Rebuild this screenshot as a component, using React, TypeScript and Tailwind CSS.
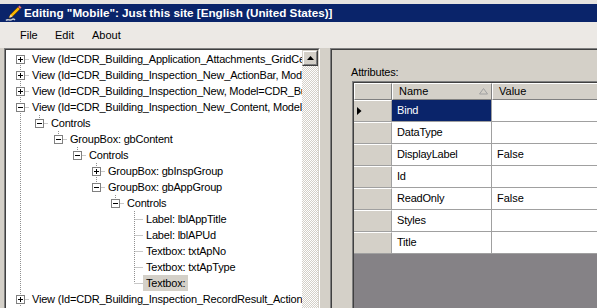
import React from 'react';

type Node = {
  text: string;
  level: number;
  box?: 'plus' | 'minus';
  next: boolean;
  anc: boolean[];
  first?: boolean;
  selected?: boolean;
};

const nodes: Node[] = [
  { text: 'View (Id=CDR_Building_Application_Attachments_GridCell, Model=CDR_Building_Application)', level: 0, box: 'plus', next: true, anc: [], first: true },
  { text: 'View (Id=CDR_Building_Inspection_New_ActionBar, Model=CDR_Building_Inspection)', level: 0, box: 'plus', next: true, anc: [] },
  { text: 'View (Id=CDR_Building_Inspection_New, Model=CDR_Building_Inspection)', level: 0, box: 'plus', next: true, anc: [] },
  { text: 'View (Id=CDR_Building_Inspection_New_Content, Model=CDR_Building_Inspection)', level: 0, box: 'minus', next: true, anc: [] },
  { text: 'Controls', level: 1, box: 'minus', next: false, anc: [true] },
  { text: 'GroupBox: gbContent', level: 2, box: 'minus', next: false, anc: [true, false] },
  { text: 'Controls', level: 3, box: 'minus', next: false, anc: [true, false, false] },
  { text: 'GroupBox: gbInspGroup', level: 4, box: 'plus', next: true, anc: [true, false, false, false] },
  { text: 'GroupBox: gbAppGroup', level: 4, box: 'minus', next: false, anc: [true, false, false, false] },
  { text: 'Controls', level: 5, box: 'minus', next: false, anc: [true, false, false, false, false] },
  { text: 'Label: lblAppTitle', level: 6, next: true, anc: [true, false, false, false, false, false] },
  { text: 'Label: lblAPUd', level: 6, next: true, anc: [true, false, false, false, false, false] },
  { text: 'Textbox: txtApNo', level: 6, next: true, anc: [true, false, false, false, false, false] },
  { text: 'Textbox: txtApType', level: 6, next: true, anc: [true, false, false, false, false, false] },
  { text: 'Textbox:', level: 6, next: false, anc: [true, false, false, false, false, false], selected: true },
  { text: 'View (Id=CDR_Building_Inspection_RecordResult_ActionBar, Model=CDR_Building_Inspection)', level: 0, box: 'plus', next: true, anc: [] },
];

const attrs: [string, string][] = [
  ['Bind', ''],
  ['DataType', ''],
  ['DisplayLabel', 'False'],
  ['Id', ''],
  ['ReadOnly', 'False'],
  ['Styles', ''],
  ['Title', ''],
];

const dot = { stroke: '#909090', strokeDasharray: '1 1', strokeWidth: 1 };

function Guides({ n }: { n: Node }) {
  const cx = (k: number) => 14.5 + 19 * k;
  const c = cx(n.level);
  return (
    <svg width={23 + 19 * n.level} height={16} className="shrink-0">
      {n.anc.map((a, k) => (a ? <line key={k} x1={cx(k)} x2={cx(k)} y1={0} y2={16} {...dot} /> : null))}
      {!n.first && <line x1={c} x2={c} y1={0} y2={8} {...dot} />}
      {n.next && <line x1={c} x2={c} y1={8} y2={16} {...dot} />}
      <line x1={c} x2={c + 10} y1={8.5} y2={8.5} {...dot} />
      {n.box && (
        <g>
          <rect x={c - 4} y={4.5} width={8} height={8} fill="#fff" stroke="#808080" />
          <line x1={c - 2.5} x2={c + 2.5} y1={8.5} y2={8.5} stroke="#000" />
          {n.box === 'plus' && <line x1={c} x2={c} y1={6} y2={11} stroke="#000" />}
        </g>
      )}
    </svg>
  );
}

function Pencil() {
  return (
    <svg width="17" height="17" viewBox="0 0 17 17" className="shrink-0">
      <path d="M1 15.5 C3 13 5 16.5 7 14.5 C8 13.5 9 14 10 15" stroke="#c8ccd4" strokeWidth="1.5" fill="none" />
      <polygon points="4,13 5.5,9.5 13,2 15,4 7.5,11.5" fill="#f7b500" stroke="#7a4e00" strokeWidth="0.8" />
      <polygon points="13,2 14.5,0.6 16.4,2.5 15,4" fill="#e9798a" stroke="#7a3a40" strokeWidth="0.6" />
      <polygon points="4,13 5.5,9.5 7.5,11.5" fill="#f4dcae" />
      <polygon points="3.2,14 4,12.2 4.9,13.1" fill="#222" />
    </svg>
  );
}

function Bevel({ children, className = '' }: { children?: React.ReactNode; className?: string }) {
  return (
    <div className={`border border-t-[#d4d0c8] border-l-[#d4d0c8] border-r-[#404040] border-b-[#404040] ${className}`}>
      <div className="w-full h-full border border-t-white border-l-white border-r-[#808080] border-b-[#808080] bg-[#d4d0c8] flex items-center justify-center">
        {children}
      </div>
    </div>
  );
}

export default function App() {
  return (
    <div className="w-[597px] h-[308px] overflow-hidden bg-[#d4d0c8] flex flex-col font-['Liberation_Sans',Arial,sans-serif] text-[11px] leading-[13px] text-black">
      <div className="h-[4px] bg-[#e6e3df] shrink-0" />
      <div className="h-[18px] bg-[#0a246a] flex items-center pl-[5px] gap-[2px] shrink-0">
        <Pencil />
        <span className="text-white font-bold text-[11.7px] whitespace-nowrap leading-[18px]">
          Editing "Mobile": Just this site [English (United States)]
        </span>
      </div>
      <div className="h-[26px] bg-[#ece9e5] flex items-center pl-[20px] shrink-0">
        <span className="w-[35px]">File</span>
        <span className="w-[37px]">Edit</span>
        <span>About</span>
      </div>

      <div className="flex-1 flex min-h-0 pl-[4px]">
        {/* tree */}
        <div className="w-[316px] shrink-0 h-[280px] border-t border-l border-r border-t-[#808080] border-l-[#808080] border-r-white">
          <div className="h-full border-t border-l border-r border-t-[#404040] border-l-[#404040] border-r-[#d4d0c8] flex">
            <div className="flex-1 min-w-0 bg-white overflow-hidden pt-[1px] tracking-[-0.2px]">
              {nodes.map((n, i) => (
                <div key={i} className="flex h-[16px] items-center whitespace-nowrap">
                  <Guides n={n} />
                  <span className={`px-[3px] leading-[16px] h-[16px] ${n.selected ? 'bg-[#d4d0c8]' : ''}`}>{n.text}</span>
                </div>
              ))}
            </div>
            <div className="w-[16px] shrink-0 flex flex-col">
              <Bevel className="h-[16px] shrink-0">
                <svg width="7" height="4" viewBox="0 0 7 4">
                  <polygon points="3.5,0 7,4 0,4" fill="#000" />
                </svg>
              </Bevel>
              <div className="flex-1 bg-[conic-gradient(#d4d0c8_25%,#ffffff_0_50%,#d4d0c8_0_75%,#ffffff_0)] bg-[length:2px_2px]" />
            </div>
          </div>
        </div>

        {/* splitter */}
        <div className="w-[10px] shrink-0" />

        {/* attributes */}
        <div className="w-[320px] shrink-0 h-[280px] border-t border-l border-[#808080]">
          <div className="h-full border-t border-l border-[#404040] pl-[19px] flex flex-col">
            <div className="mt-[16px] h-[13px] leading-[13px] tracking-[-0.2px]">Attributes:</div>
            <div className="mt-[2px] ml-[1px] flex-1 border-t border-l border-[#808080]">
              <div className="h-full border-t border-l border-[#404040] bg-[#858286]">
                <div className="flex h-[17px]">
                  <div className="w-[38px] shrink-0 bg-[#d4d0c8] border-t border-l border-r border-b border-t-white border-l-white border-r-[#808080] border-b-[#808080]" />
                  <div className="w-[100px] shrink-0 bg-[#d4d0c8] border-t border-l border-r border-b border-t-white border-l-white border-r-[#808080] border-b-[#808080] flex items-center pl-[6px] relative">
                    <span>Name</span>
                    <svg width="9" height="7" className="absolute left-[86px] top-[4px]">
                      <polygon points="0.5,6 4.5,0.5 8.5,6" fill="none" stroke="#a0a0a0" />
                    </svg>
                  </div>
                  <div className="flex-1 bg-[#d4d0c8] border-t border-l border-b border-t-white border-l-white border-b-[#808080] flex items-center pl-[6px]">
                    Value
                  </div>
                </div>
                {attrs.map(([k, v], i) => (
                  <div key={k} className="flex h-[22px]">
                    <div className="w-[38px] shrink-0 bg-[#d4d0c8] border-t border-r border-b border-t-white border-r-[#a0a0a0] border-b-[#a0a0a0] relative">
                      {i === 0 && (
                        <svg width="5" height="8" className="absolute left-[3px] top-[6px]">
                          <polygon points="0,0 4.5,4 0,8" fill="#000" />
                        </svg>
                      )}
                    </div>
                    <div
                      className={`w-[100px] shrink-0 border-r border-b border-[#a0a0a0] pl-[5px] flex items-center tracking-[-0.2px] ${
                        i === 0 ? 'bg-[#0a246a] text-white' : 'bg-white'
                      }`}
                    >
                      {k}
                    </div>
                    <div className="flex-1 bg-white border-b border-[#a0a0a0] pl-[5px] flex items-center">{v}</div>
                  </div>
                ))}
              </div>
            </div>
          </div>
        </div>
      </div>
    </div>
  );
}
